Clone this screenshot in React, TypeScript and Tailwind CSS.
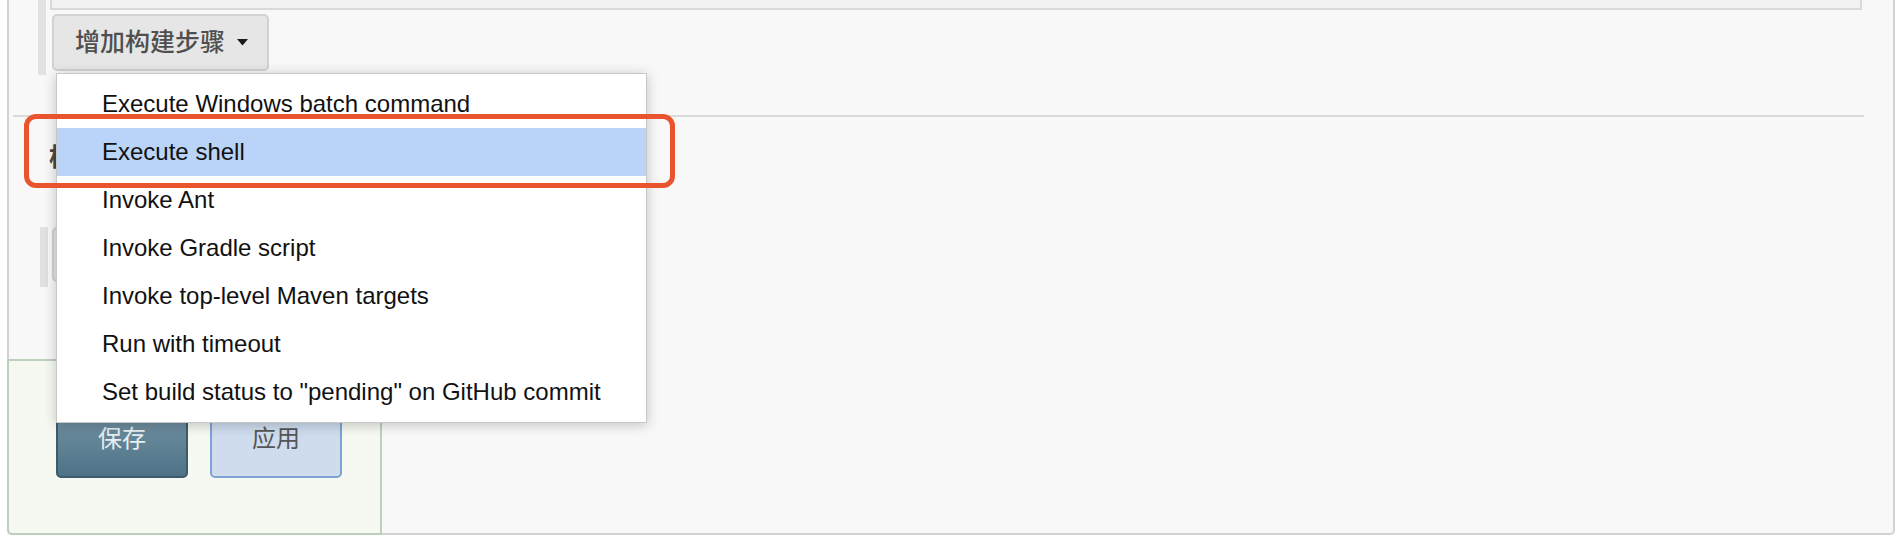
import React from 'react';

const menuItems = [
  'Execute Windows batch command',
  'Execute shell',
  'Invoke Ant',
  'Invoke Gradle script',
  'Invoke top-level Maven targets',
  'Run with timeout',
  'Set build status to "pending" on GitHub commit',
];

const Caret: React.FC = () => (
  <svg width="11" height="7" viewBox="0 0 11 7" className="ml-[12px]">
    <path d="M0 0 L11 0 L5.5 6.5 Z" fill="#1a1a1a" />
  </svg>
);

const DropdownMenu: React.FC<{ active: number }> = ({ active }) => (
  <div className="absolute left-[56px] top-[73px] w-[591px] border border-[#c8c8c8] bg-white py-[6px] shadow-[0_2px_12px_rgba(0,0,0,0.22)]">
    {menuItems.map((item, i) => (
      <div
        key={item}
        className={`h-[48px] pl-[45px] text-[24px] leading-[48px] text-[#111] ${i === active ? 'bg-[#b9d4f8]' : ''}`}
      >
        {item}
      </div>
    ))}
  </div>
);

export default function App() {
  return (
    <div className="relative h-[546px] w-[1900px] overflow-hidden bg-white font-['Liberation_Sans','Noto_Sans_CJK_SC',sans-serif]">
      <div className="ml-[7px] flex h-[535px] w-[1888px] flex-col rounded-b-[5px] border-x-2 border-b-2 border-[#d2d2d2] bg-[#f8f8f8]">
        {/* build steps */}
        <div className="flex">
          <div className="ml-[29px] h-[75px] w-[8px] bg-[#e1e1e1]" />
          <div className="ml-[4px] flex flex-col">
            <div className="h-[10px] w-[1812px] border-x-2 border-b-2 border-[#d9d9d9] bg-[#f2f2f2]" />
            <button className="ml-[2px] mt-[4px] flex h-[57px] w-[217px] items-center rounded-[5px] border-2 border-[#d2d2d2] bg-[#e6e6e6] pl-[21px] text-[25px] font-medium text-[#4f4f4f]">
              增加构建步骤
              <Caret />
            </button>
          </div>
        </div>

        <div className="ml-[4px] mt-[40px] h-[2px] w-[1851px] bg-[#dadada]" />

        <div className="ml-[40px] mt-[22px] text-[25px] font-bold leading-[36px] text-[#484848]">构建后操作</div>

        {/* post-build steps */}
        <div className="mt-[52px] flex">
          <div className="ml-[31px] h-[60px] w-[8px] bg-[#e1e1e1]" />
          <button className="ml-[4px] flex h-[55px] items-center rounded-[5px] border-2 border-[#d2d2d2] bg-[#e6e6e6] px-[21px] text-[25px] font-medium text-[#4f4f4f]">
            增加构建后操作步骤
            <Caret />
          </button>
        </div>

        {/* save / apply bar */}
        <div className="-mb-[2px] -ml-[2px] mt-auto flex h-[176px] w-[375px] gap-[22px] rounded-bl-[5px] border-2 border-[#bcd1bc] bg-[#f5f9f1] pl-[47px] pt-[38px]">
          <button className="h-[79px] w-[132px] rounded-[5px] border-2 border-[#3e5b6b] bg-gradient-to-b from-[#7b99aa] to-[#4d7286] text-[24px] text-[#e8eef2]">
            保存
          </button>
          <button className="h-[79px] w-[132px] rounded-[5px] border-2 border-[#7ea2d4] bg-[#cedcee] text-[24px] text-[#555]">
            应用
          </button>
        </div>
      </div>

      <DropdownMenu active={1} />

      <div className="absolute left-[24px] top-[114px] h-[74px] w-[651px] rounded-[12px] border-[5px] border-[#e9532d]" />
    </div>
  );
}
